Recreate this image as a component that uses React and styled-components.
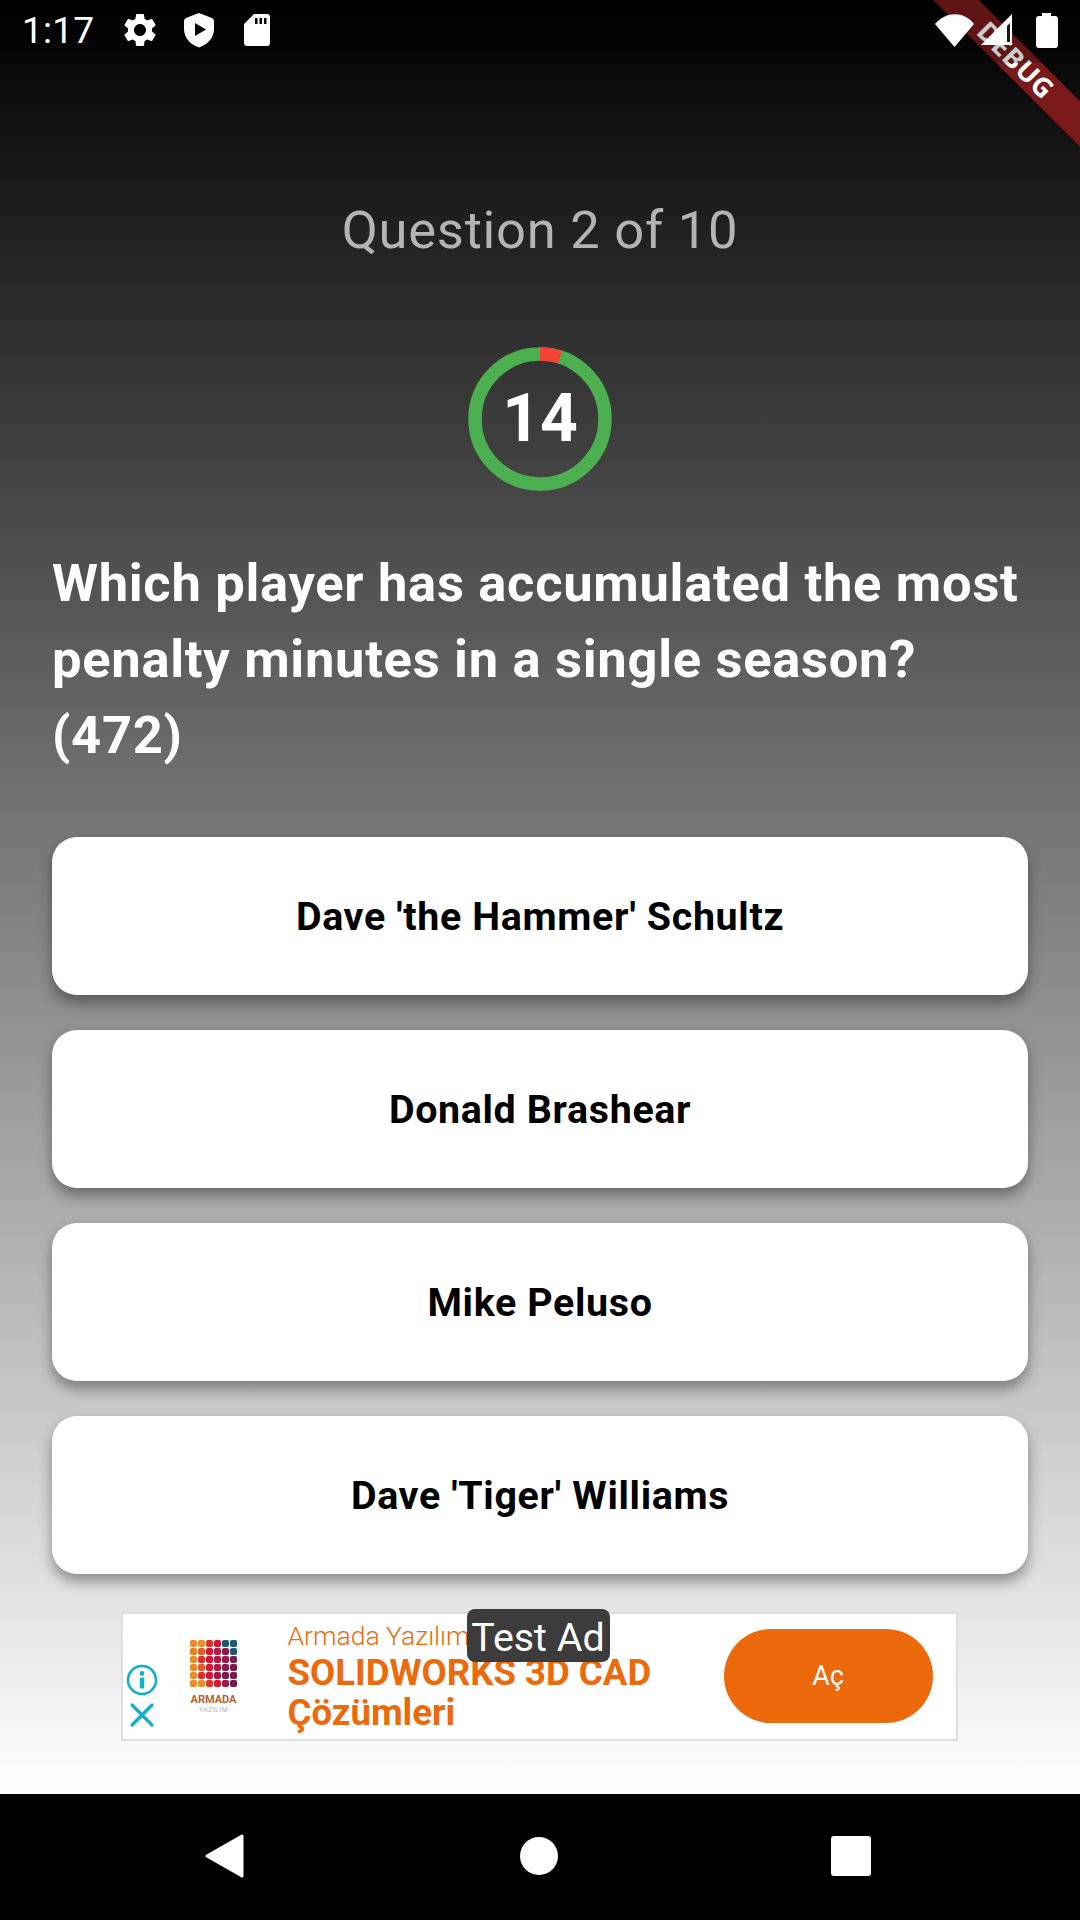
import React from "react";
import styled, { createGlobalStyle } from "styled-components";

const Global = createGlobalStyle`
  html, body { margin: 0; padding: 0; background: #000; }
  body { font-family: Roboto, "Liberation Sans", sans-serif; }
  * { box-sizing: border-box; }
`;
const Screen = styled.div`
  width: 1080px; height: 1920px; display: flex; flex-direction: column;
  position: relative; overflow: hidden;
`;
const Main = styled.main`
  height: 1794px; display: flex; flex-direction: column;
  background: linear-gradient(180deg, #000 0%, #fff 100%);
`;
const StatusBar = styled.header`
  height: 63px; display: flex; align-items: center; justify-content: space-between;
  padding: 0 21px 3px 22px; background: rgba(0,0,0,.2); position: relative; z-index: 3; color: #fff;
`;
const StatusGroup = styled.div`
  display: flex; align-items: center; gap: ${p => p.$gap}px;
`;
const Time = styled.span`
  font-size: 37px; font-weight: 400; width: 98px; letter-spacing: .2px;
`;
const Ribbon = styled.div`
  position: absolute; z-index: 2; top: 44px; left: 866px; width: 300px; height: 32px;
  transform: rotate(45deg); background: #7a1a1a;
  display: flex; align-items: center; justify-content: center;
  color: #fff; font: 700 27px/32px "Noto Sans", sans-serif; letter-spacing: .5px;
`;
const Title = styled.h1`
  margin: 137px 0 0; text-align: center; font-size: 52.5px; line-height: 60px; font-weight: 400;
  color: #b4b4b4; letter-spacing: .75px;
`;
const RingBox = styled.div`
  position: relative; width: 144px; height: 144px; margin: 87px auto 0;
  display: flex; align-items: center; justify-content: center;
`;
const RingSvg = styled.svg`
  position: absolute; inset: 0;
`;
const RingNum = styled.span`
  font-size: 66px; font-weight: 700; color: #fff; position: relative; margin-top: -2px;
`;
const Question = styled.h2`
  margin: 54px 0 0; padding: 0 52px; font-size: 52.5px; line-height: 76.2px; font-weight: 700; color: #fff;
  letter-spacing: .7px;
`;
const Answers = styled.div`
  margin-top: 63px; padding: 0 52px; display: flex; flex-direction: column; gap: 35px;
`;
const Answer = styled.button`
  height: 158px; padding: 2px 0 0; border: 0; border-radius: 25px; background: #fff; color: #000;
  font-family: inherit; font-size: 39.4px; font-weight: 700; letter-spacing: .65px;
  box-shadow: 0 8px 14px rgba(0,0,0,.36);
`;
const Ad = styled.aside`
  position: relative; align-self: center; margin-top: 38px; width: 837px; height: 129px; left: -1px;
  background: #fff; border: 2px solid #dedede; display: flex; align-items: stretch;
`;
const AdChoices = styled.div`
  width: 35px; padding: 50px 0 0 0; display: flex; flex-direction: column; align-items: flex-end; gap: 6px;
`;
const AdLogo = styled.div`
  width: 130px; padding: 26px 0 0 32px; display: flex; flex-direction: column; align-items: flex-start;
`;
const LogoGrid = styled.div`
  display: grid; grid-template-columns: repeat(6, 7px); grid-auto-rows: 7px; gap: 1px;
`;
const LogoCell = styled.i`
  border-radius: 2px; background: ${p => p.$c};
`;
const LogoName = styled.span`
  margin-top: 6px; width: 48px; text-align: center; font-size: 11px; font-weight: 700; color: #b5623a;
`;
const LogoSub = styled.span`
  width: 48px; text-align: center; font-size: 7px; color: #b5b5b5; letter-spacing: .4px;
`;
const AdText = styled.div`
  flex: 1; padding-top: 4px; display: flex; flex-direction: column; color: #ec6a0c; white-space: nowrap;
`;
const Adv = styled.span`
  font-size: 26.5px; line-height: 35px; font-weight: 300;
`;
const AdHead = styled.span`
  font-size: 36.6px; line-height: 40px; font-weight: 700;
`;
const OpenBtn = styled.div`
  align-self: center; width: 209px; height: 94px; margin-right: 23px; border-radius: 47px;
  background: #ec6a0c; color: #fff; font-size: 27px;
  display: flex; align-items: center; justify-content: center;
`;
const TestAd = styled.div`
  position: absolute; left: 344px; top: -5px; width: 143px; height: 53px; border-radius: 8px;
  background: #3c3c3c; color: #fff; font-size: 39.4px; line-height: 57px; text-align: center;
`;
const NavBar = styled.nav`
  height: 126px; background: #000; display: grid; grid-template-columns: 315px 314px 310px;
  padding: 0 0 3px 67px; align-items: center; justify-items: center;
`;

const logoColors = [
  "#ec8a2a","#ec8a2a","#e0312f","#d5152f","#1d5a78","#1d5a78",
  "#e9851f","#e45a25","#d5152f","#b01c42","#8c1b4a","#1d5a78",
  "#ec8a2a","#e0312f","#d5152f","#b01c42","#a01a48","#7a1a4c",
  "#ec8a2a","#e45a25","#d5152f","#b01c42","#8c1b4a","#7a1a4c",
  "#ec8a2a","#e0312f","#d5152f","#a01a48","#7a1a4c","#7a1a4c",
  "#ec8a2a","#ec8a2a","#e0312f","#d5152f","#a01a48","#6e1a4c",
];

const answers = ["Dave 'the Hammer' Schultz", "Donald Brashear", "Mike Peluso", "Dave 'Tiger' Williams"];

export default function App() {
  return (
    <Screen>
      <Global />
      <Main>
        <StatusBar>
          <StatusGroup $gap={0}>
            <Time>1:17</Time>
            <StatusGroup $gap={24}>
              <svg width="40" height="40" viewBox="0 0 24 24" fill="#fff"><path d="M19.14 12.94c.04-.3.06-.61.06-.94 0-.32-.02-.64-.07-.94l2.03-1.58c.18-.14.23-.41.12-.61l-1.92-3.32c-.12-.22-.37-.29-.59-.22l-2.39.96c-.5-.38-1.03-.7-1.62-.94l-.36-2.54c-.04-.24-.24-.41-.48-.41h-3.84c-.24 0-.43.17-.47.41l-.36 2.54c-.59.24-1.13.57-1.62.94l-2.39-.96c-.22-.08-.47 0-.59.22L2.74 8.87c-.12.21-.08.47.12.61l2.03 1.58c-.05.3-.09.63-.09.94s.02.64.07.94l-2.03 1.58c-.18.14-.23.41-.12.61l1.92 3.32c.12.22.37.29.59.22l2.39-.96c.5.38 1.03.7 1.62.94l.36 2.54c.05.24.24.41.48.41h3.84c.24 0 .44-.17.47-.41l.36-2.54c.59-.24 1.13-.56 1.62-.94l2.39.96c.22.08.47 0 .59-.22l1.92-3.32c.12-.22.07-.47-.12-.61l-2.01-1.58zM12 15.6c-1.98 0-3.6-1.62-3.6-3.6s1.62-3.6 3.6-3.6 3.6 1.62 3.6 3.6-1.62 3.6-3.6 3.6z"/></svg>
              <svg width="30" height="36" viewBox="0 0 30 36"><path fillRule="evenodd" fill="#fff" d="M15 1 L28 6 Q30 7 30 9 V17 C30 26 23 33 15 35.5 C7 33 0 26 0 17 V9 Q0 7 2 6 Z M11 11 V24 L22 17.5 Z"/></svg>
              <svg width="28" height="34" viewBox="0 0 28 34" style={{ marginLeft: 5 }}><path fillRule="evenodd" fill="#fff" d="M11 1 H24 Q27 1 27 4 V30 Q27 33 24 33 H4 Q1 33 1 30 V11 Z M12 5 V11 H14.5 V5 Z M16.5 5 V11 H19 V5 Z M21 5 V11 H23.5 V5 Z"/></svg>
            </StatusGroup>
          </StatusGroup>
          <StatusGroup $gap={5}>
            <svg width="40" height="33" viewBox="0 0 40 33"><path fill="#fff" d="M0 10 C11 -3 29 -3 39 10 L19.5 33 Z"/></svg>
            <svg width="34" height="34" viewBox="0 0 34 34"><path fill="#fff" d="M32 1 V32 H1 Z"/><path fill="#000" d="M27 13 V29 H30 V10 Z" opacity=".9"/></svg>
            <svg width="24" height="36" viewBox="0 0 24 36" style={{ marginLeft: 16 }}><path fill="#fff" d="M7 1 H16 V4 H20 Q23 4 23 7 V33 Q23 36 20 36 H4 Q1 36 1 33 V7 Q1 4 4 4 H7 Z"/></svg>
          </StatusGroup>
        </StatusBar>
        <Title>Question 2 of 10</Title>
        <RingBox>
          <RingSvg width="144" height="144" viewBox="0 0 144 144">
            <circle cx="72" cy="72" r="65" fill="none" stroke="#4caf50" strokeWidth="13.5" />
            <path d="M72 7 A65 65 0 0 1 92.1 10.2" fill="none" stroke="#f44336" strokeWidth="13.5" />
          </RingSvg>
          <RingNum>14</RingNum>
        </RingBox>
        <Question>Which player has accumulated the most<br />penalty minutes in a single season?<br />(472)</Question>
        <Answers>
          {answers.map(a => <Answer key={a}>{a}</Answer>)}
        </Answers>
        <Ad>
          <AdChoices>
            <svg width="32" height="32" viewBox="0 0 32 32"><circle cx="16" cy="16" r="14" fill="none" stroke="#0fb0c8" strokeWidth="2.6"/><circle cx="16" cy="9.5" r="2.4" fill="#0fb0c8"/><rect x="13.8" y="13.5" width="4.4" height="11" rx="1" fill="#0fb0c8"/></svg>
            <svg width="26" height="26" viewBox="0 0 26 26" style={{ marginRight: 3 }}><path d="M3 3 L23 23 M23 3 L3 23" stroke="#0fb0c8" strokeWidth="3.2" strokeLinecap="round"/></svg>
          </AdChoices>
          <AdLogo>
            <LogoGrid>{logoColors.map((c, i) => <LogoCell key={i} $c={c} />)}</LogoGrid>
            <LogoName>ARMADA</LogoName>
            <LogoSub>YAZILIM</LogoSub>
          </AdLogo>
          <AdText>
            <Adv>Armada Yazılım</Adv>
            <AdHead>SOLIDWORKS 3D CAD</AdHead>
            <AdHead>Çözümleri</AdHead>
          </AdText>
          <OpenBtn>Aç</OpenBtn>
          <TestAd>Test Ad</TestAd>
        </Ad>
      </Main>
      <Ribbon>DEBUG</Ribbon>
      <NavBar>
        <svg width="40" height="44" viewBox="0 0 40 44"><path fill="#fff" stroke="#fff" strokeWidth="3" strokeLinejoin="round" d="M37 2 V42 L2 22 Z"/></svg>
        <svg width="38" height="38" viewBox="0 0 38 38"><circle cx="19" cy="19" r="19" fill="#fff"/></svg>
        <svg width="40" height="40" viewBox="0 0 40 40"><rect width="40" height="40" rx="3" fill="#fff"/></svg>
      </NavBar>
    </Screen>
  );
}
